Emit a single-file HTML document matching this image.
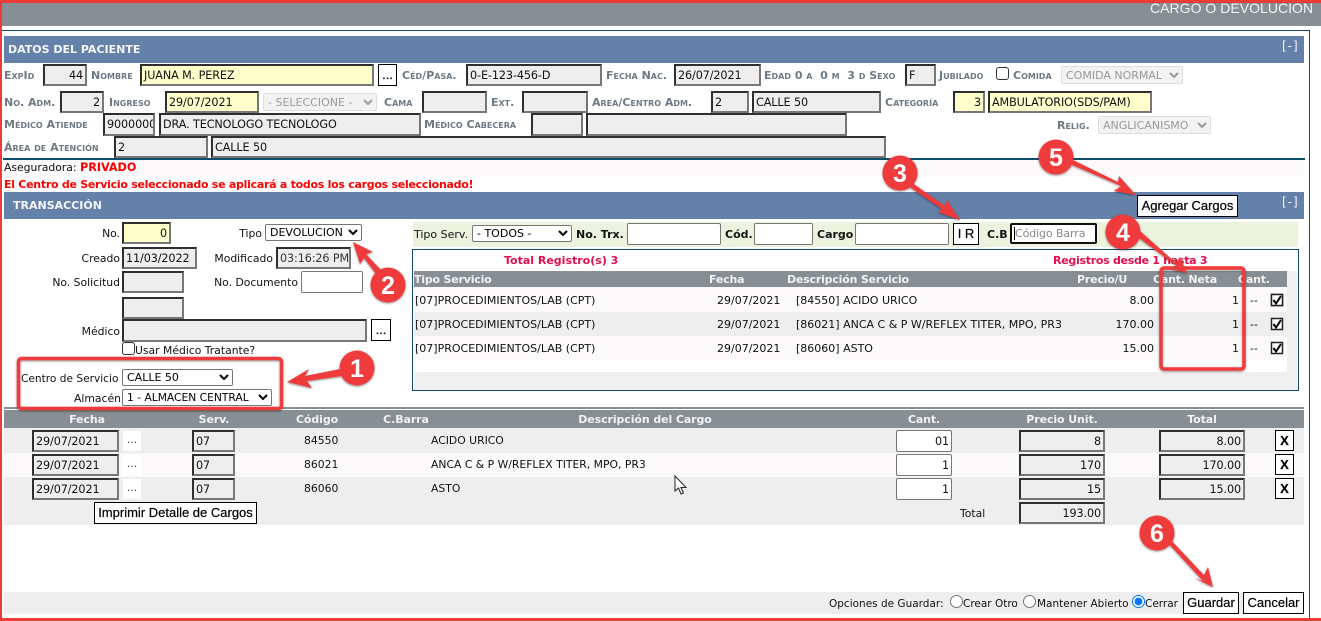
<!DOCTYPE html>
<html><head><meta charset="utf-8"><style>
html,body{margin:0;padding:0;background:#fff}
body{width:1321px;height:621px;position:relative;overflow:hidden;font:11px "DejaVu Sans",sans-serif;color:#111}
div{position:absolute;box-sizing:border-box;white-space:nowrap}
.b{background:#6482a9;color:#f4f6fa;font:bold 11px "DejaVu Sans",sans-serif;left:4px;width:1300px;height:27px;line-height:28px;padding-left:4px}
.l{font:bold 11px "DejaVu Sans",sans-serif;font-variant:small-caps;color:#6d7984;line-height:14px;margin-top:1px}
.i{border:2px solid;border-color:#2e2e2e #777 #777 #2e2e2e;background:#eee;padding:0 2px;line-height:20px;font-size:11.2px;overflow:hidden;letter-spacing:-.1px;height:22px}
.y{background:#ffc}
.r{text-align:right}
.w{background:#fff;border:1px solid #777;border-radius:2px;line-height:21px}
.t{line-height:14px;font-size:10.8px;margin-top:1px}
.q{font-size:11px}
.s{font-size:10.5px}
.bn{background:#fff;border:1px solid #000;text-align:center;font:13px "Liberation Sans",sans-serif;color:#000;-webkit-text-stroke:.2px #000}
.h{background:#878e94;color:#f2f2f2;font:bold 11px "DejaVu Sans",sans-serif;line-height:19px;letter-spacing:-.1px}
.h div{top:0}
.c{transform:translateX(-50%)}
.m{left:1282px;color:#f4f6fa;font:12px 'DejaVu Sans';letter-spacing:1px;line-height:14px}
select{position:absolute;box-sizing:border-box;margin:0;font:11px "DejaVu Sans",sans-serif;padding:0;background:#fff;border:1px solid #767676;border-radius:2px;color:#000}
select:disabled{background:#f2f2f2;color:#999;border-color:#ddd;opacity:1}
input{position:absolute;margin:0}
input[type=checkbox]{appearance:none;-webkit-appearance:none;border:1px solid #333;border-radius:3px;background:#fff;width:13px;height:13px}
</style></head><body>
<div style="left:0;top:0;width:1321px;height:26px;background:#878e94"></div>
<div style="left:0;top:0;width:1321px;height:3px;background:#ef3a3a"></div>
<div style="left:1150px;top:0;font:14px 'Liberation Sans',sans-serif;color:#f4f4f4;line-height:16px;letter-spacing:.03px">CARGO O DEVOLUCION</div>
<div style="left:2px;top:30px;width:1308px;height:591px;border:1px solid #0d4c6b;border-width:1px 1px 0 0"></div>
<div style="left:0;top:0;width:2px;height:621px;background:#ef3a3a"></div>
<div class="b" style="top:36px">DATOS DEL PACIENTE</div>
<div class="m" style="top:39px">[-]</div>

<!-- row 1 -->
<div class="l" style="left:4px;top:68px">ExpId</div><div class="i r" style="left:43px;top:64px;width:44px">44</div>
<div class="l" style="left:91px;top:68px">Nombre</div><div class="i y" style="left:140px;top:64px;width:234px">JUANA M. PEREZ</div>
<div class="bn" style="left:378px;top:64px;width:19px;height:22px;line-height:20px">...</div>
<div class="l" style="left:402px;top:68px">Céd/Pasa.</div><div class="i" style="left:466px;top:64px;width:136px">0-E-123-456-D</div>
<div class="l" style="left:606px;top:68px">Fecha Nac.</div><div class="i" style="left:674px;top:64px;width:87px">26/07/2021</div>
<div class="l" style="left:764px;top:68px">Edad 0 a&nbsp; 0 m&nbsp; 3 d Sexo</div><div class="i" style="left:905px;top:64px;width:31px">F</div>
<div class="l" style="left:939px;top:68px">Jubilado</div><input type="checkbox" style="left:996px;top:67px">
<div class="l" style="left:1013px;top:68px">Comida</div>
<select disabled style="left:1061px;top:66px;width:122px;height:18px"><option>COMIDA NORMAL</option></select>

<!-- row 2 -->
<div class="l" style="left:4px;top:95px">No. Adm.</div><div class="i r" style="left:60px;top:91px;width:44px">2</div>
<div class="l" style="left:109px;top:95px">Ingreso</div><div class="i y" style="left:165px;top:91px;width:94px">29/07/2021</div>
<select disabled style="left:263px;top:93px;width:114px;height:18px"><option>- SELECCIONE -</option></select>
<div class="l" style="left:384px;top:95px">Cama</div><div class="i" style="left:422px;top:91px;width:65px"></div>
<div class="l" style="left:491px;top:95px">Ext.</div><div class="i" style="left:522px;top:91px;width:66px"></div>
<div class="l" style="left:592px;top:95px">Area/Centro Adm.</div><div class="i" style="left:711px;top:91px;width:38px">2</div>
<div class="i" style="left:752px;top:91px;width:129px">CALLE 50</div>
<div class="l" style="left:885px;top:95px">Categoría</div><div class="i y r" style="left:953px;top:91px;width:32px">3</div>
<div class="i y" style="left:988px;top:91px;width:164px">AMBULATORIO(SDS/PAM)</div>

<!-- row 3 -->
<div class="l" style="left:4px;top:117px">Médico Atiende</div><div class="i" style="left:103px;top:113px;width:52px;height:23px">9000000</div>
<div class="i" style="left:159px;top:113px;width:262px;height:23px">DRA. TECNOLOGO TECNOLOGO</div>
<div class="l" style="left:424px;top:117px">Médico Cabecera</div><div class="i" style="left:531px;top:113px;width:52px;height:23px"></div>
<div class="i" style="left:586px;top:113px;width:261px;height:23px"></div>
<div class="l" style="left:1057px;top:118px">Relig.</div>
<select disabled style="left:1098px;top:116px;width:113px;height:18px"><option>ANGLICANISMO</option></select>

<!-- row 4 -->
<div class="l" style="left:4px;top:140px">Área de Atención</div><div class="i" style="left:114px;top:136px;width:94px">2</div>
<div class="i" style="left:211px;top:136px;width:675px">CALLE 50</div>
<div style="left:3px;top:158px;width:1302px;height:2px;background:#0d4c6b"></div>
<div style="left:4px;top:160px;width:1300px;height:16px;background:#fbf9fa"></div>
<div class="t" style="left:4px;top:160px">Aseguradora: <b style="color:#f00;font-size:11.2px">PRIVADO</b></div>
<div style="left:4px;top:178px;font:bold 11px 'DejaVu Sans';color:#f00;line-height:14px;letter-spacing:-.27px">El Centro de Servicio seleccionado se aplicará a todos los cargos seleccionado!</div>

<div class="b" style="top:192px;padding-left:9px">TRANSACCIÓN</div>
<div class="m" style="top:195px">[-]</div>

<!-- left transaction -->
<div class="t" style="left:60px;width:60px;text-align:right;top:226px">No.</div><div class="i y r" style="left:122px;top:222px;width:49px">0</div>
<div class="t" style="left:228px;top:226px;width:34px;text-align:right">Tipo</div>
<select style="left:265px;top:224px;width:97px;height:17px"><option>DEVOLUCION</option></select>
<div class="t" style="left:60px;width:60px;text-align:right;top:251px">Creado</div><div class="i" style="left:122px;top:247px;width:75px">11/03/2022</div>
<div class="t" style="left:200px;top:251px;width:73px;text-align:right">Modificado</div><div class="i" style="left:276px;top:247px;width:75px;color:#333">03:16:26 PM</div>
<div class="t" style="left:40px;width:80px;text-align:right;top:275px">No. Solicitud</div><div class="i" style="left:122px;top:271px;width:62px"></div>
<div class="t" style="left:200px;top:275px;width:98px;text-align:right">No. Documento</div><div class="i w" style="left:301px;top:271px;width:62px"></div>
<div class="i" style="left:122px;top:297px;width:62px"></div>
<div class="t" style="left:60px;width:60px;text-align:right;top:324px">Médico</div><div class="i" style="left:122px;top:319px;width:245px;height:23px"></div>
<div class="bn" style="left:371px;top:319px;width:20px;height:22px;line-height:20px">...</div>
<input type="checkbox" style="left:122px;top:342px">
<div class="t" style="left:135px;top:343px">Usar Médico Tratante?</div>
<div class="t" style="left:21px;top:371px;font-size:10.6px">Centro de Servicio</div>
<select style="left:122px;top:369px;width:111px;height:17px"><option>CALLE 50</option></select>
<div class="t" style="left:74px;top:391px">Almacén</div>
<select style="left:122px;top:389px;width:150px;height:17px;font-size:10.7px"><option>1 - ALMACEN CENTRAL</option></select>

<!-- filter -->
<div style="left:413px;top:222px;width:885px;height:25px;background:#ebf3de"></div>
<div class="t q" style="left:414px;top:227px">Tipo Serv.</div>
<select style="left:472px;top:225px;width:100px;height:17px"><option>- TODOS -</option></select>
<div class="t q" style="left:576px;top:227px;font-weight:bold">No. Trx.</div><div class="i w" style="left:627px;top:223px;width:94px"></div>
<div class="t q" style="left:725px;top:227px;font-weight:bold">Cód.</div><div class="i w" style="left:754px;top:223px;width:59px"></div>
<div class="t q" style="left:817px;top:227px;font-weight:bold">Cargo</div><div class="i w" style="left:855px;top:223px;width:94px"></div>
<div class="bn" style="left:953px;top:223px;width:26px;height:22px;line-height:20px">I R</div>
<div class="t q" style="left:987px;top:227px;font-weight:bold">C.B</div>
<div class="i" style="left:1010px;top:223px;width:87px;height:21px;background:#fff;border-color:#111;border-radius:2px;color:#888;line-height:18px;padding-left:3px;font-size:11px">Código Barra</div>
<div style="left:1014px;top:227px;width:1px;height:13px;background:#000"></div>

<!-- list -->
<div style="left:412px;top:249px;width:887px;height:142px;border:1px solid #0d4c6b;background:#fff"></div>
<div style="left:504px;top:254px;font:bold 11px 'DejaVu Sans';color:#e0104f;line-height:14px">Total Registro(s) 3</div>
<div style="left:1053px;top:254px;font:bold 11px 'DejaVu Sans';color:#e0104f;line-height:14px;letter-spacing:-.28px">Registros desde 1 hasta 3</div>
<div style="left:1287px;top:271px;width:10px;height:101px;background:#f0f0f0"></div>
<div class="h" style="left:414px;top:271px;width:873px;height:16px;line-height:18px;letter-spacing:-.2px">
<div style="left:0">Tipo Servicio</div><div style="left:295px">Fecha</div><div style="left:373px">Descripción Servicio</div><div style="left:663px">Precio/U</div><div style="left:739px">Cant. Neta</div><div style="left:824px">Cant.</div></div>
<div style="left:414px;top:287px;width:873px;height:25px;background:#fbf9fa"></div>
<div style="left:414px;top:312px;width:873px;height:24px;background:#eee"></div>
<div style="left:414px;top:336px;width:873px;height:24px;background:#fbf9fa"></div>
<div style="left:414px;top:372px;width:883px;height:18px;background:#f0f0f0"></div>

<div class="t q" style="left:415px;top:293px">[07]PROCEDIMIENTOS/LAB (CPT)</div><div class="t q" style="left:717px;top:293px">29/07/2021</div><div class="t q" style="left:796px;top:293px">[84550] ACIDO URICO</div><div class="t q r" style="left:1100px;width:54px;top:293px">8.00</div><div class="t q" style="left:1232px;top:293px">1</div><div class="t q" style="left:1250px;top:293px">--</div>
<div class="t q" style="left:415px;top:317px">[07]PROCEDIMIENTOS/LAB (CPT)</div><div class="t q" style="left:717px;top:317px">29/07/2021</div><div class="t q" style="left:796px;top:317px">[86021] ANCA C &amp; P W/REFLEX TITER, MPO, PR3</div><div class="t q r" style="left:1100px;width:54px;top:317px">170.00</div><div class="t q" style="left:1232px;top:317px">1</div><div class="t q" style="left:1250px;top:317px">--</div>
<div class="t q" style="left:415px;top:341px">[07]PROCEDIMIENTOS/LAB (CPT)</div><div class="t q" style="left:717px;top:341px">29/07/2021</div><div class="t q" style="left:796px;top:341px">[86060] ASTO</div><div class="t q r" style="left:1100px;width:54px;top:341px">15.00</div><div class="t q" style="left:1232px;top:341px">1</div><div class="t q" style="left:1250px;top:341px">--</div>

<!-- cargos -->
<div style="left:4px;top:407px;width:1300px;height:2px;background:#878e94"></div>
<div class="h" style="left:4px;top:410px;width:1300px;height:18px">
<div class="c" style="left:83px">Fecha</div><div class="c" style="left:210px">Serv.</div><div class="c" style="left:313px">Código</div><div class="c" style="left:402px">C.Barra</div><div class="c" style="left:641px">Descripción del Cargo</div><div class="c" style="left:920px">Cant.</div><div class="c" style="left:1058px">Precio Unit.</div><div class="c" style="left:1198px">Total</div></div>
<div style="left:4px;top:428px;width:1300px;height:25px;background:#eee"></div>
<div style="left:4px;top:453px;width:1300px;height:24px;background:#fbf9fa"></div>
<div style="left:4px;top:477px;width:1300px;height:48px;background:#eee"></div>

<div class="i" style="left:32px;top:430px;width:87px">29/07/2021</div><div style="left:123px;top:431px;width:18px;height:20px;background:#fff;text-align:center;color:#444;line-height:18px">...</div><div class="i" style="left:192px;top:430px;width:43px">07</div><div class="t" style="left:304px;top:433px">84550</div><div class="t" style="left:431px;top:433px">ACIDO URICO</div><div class="i w r" style="left:896px;top:430px;width:56px">01</div><div class="i r" style="left:1019px;top:430px;width:86px">8</div><div class="i r" style="left:1159px;top:430px;width:86px">8.00</div><div class="bn" style="left:1275px;top:430px;width:19px;height:21px;line-height:19px;font-weight:bold">X</div>
<div class="i" style="left:32px;top:454px;width:87px">29/07/2021</div><div style="left:123px;top:455px;width:18px;height:20px;background:#fff;text-align:center;color:#444;line-height:18px">...</div><div class="i" style="left:192px;top:454px;width:43px">07</div><div class="t" style="left:304px;top:457px">86021</div><div class="t" style="left:431px;top:457px">ANCA C &amp; P W/REFLEX TITER, MPO, PR3</div><div class="i w r" style="left:896px;top:454px;width:56px">1</div><div class="i r" style="left:1019px;top:454px;width:86px">170</div><div class="i r" style="left:1159px;top:454px;width:86px">170.00</div><div class="bn" style="left:1275px;top:454px;width:19px;height:21px;line-height:19px;font-weight:bold">X</div>
<div class="i" style="left:32px;top:478px;width:87px">29/07/2021</div><div style="left:123px;top:479px;width:18px;height:20px;background:#fff;text-align:center;color:#444;line-height:18px">...</div><div class="i" style="left:192px;top:478px;width:43px">07</div><div class="t" style="left:304px;top:481px">86060</div><div class="t" style="left:431px;top:481px">ASTO</div><div class="i w r" style="left:896px;top:478px;width:56px">1</div><div class="i r" style="left:1019px;top:478px;width:86px">15</div><div class="i r" style="left:1159px;top:478px;width:86px">15.00</div><div class="bn" style="left:1275px;top:478px;width:19px;height:21px;line-height:19px;font-weight:bold">X</div>
<div class="bn" style="left:94px;top:502px;width:163px;height:22px;line-height:20px">Imprimir Detalle de Cargos</div>
<div class="t" style="left:960px;top:506px">Total</div><div class="i r" style="left:1019px;top:502px;width:86px">193.00</div>

<!-- bottom -->
<div style="left:4px;top:592px;width:1300px;height:22px;background:#eee"></div>
<div class="t s" style="left:829px;top:596px">Opciones de Guardar:</div>
<input type="radio" style="left:950px;top:595px;width:13px;height:13px"><div class="t s" style="left:963px;top:596px">Crear Otro</div>
<input type="radio" style="left:1023px;top:595px;width:13px;height:13px"><div class="t s" style="left:1037px;top:596px">Mantener Abierto</div>
<input type="radio" checked style="left:1132px;top:595px;width:13px;height:13px"><div class="t s" style="left:1145px;top:596px">Cerrar</div>
<div class="bn" style="left:1183px;top:592px;width:56px;height:22px;line-height:20px">Guardar</div>
<div class="bn" style="left:1243px;top:592px;width:61px;height:22px;line-height:20px">Cancelar</div>
<div style="left:0;top:618px;width:1321px;height:3px;background:#ef3a3a"></div>

<!-- cursor + annotations -->
<svg style="position:absolute;left:0;top:0" width="1321" height="621" viewBox="0 0 1321 621">
<g fill="#fff" stroke="#222" stroke-width="1.500">
<rect x="1271" y="294" width="12" height="12" stroke="#9a8a70" stroke-width="1"/><rect x="1271.500" y="294.500" width="11" height="11"/>
<rect x="1271.500" y="318.500" width="11" height="11"/>
<rect x="1271.500" y="342.500" width="11" height="11"/>
</g>
<g fill="none" stroke="#000" stroke-width="2">
<path d="M1273.500 300L1276 303.500 1281 296"/>
<path d="M1273.500 324L1276 327.500 1281 320"/>
<path d="M1273.500 348L1276 351.500 1281 344"/>
</g>
<path d="M675 476V491L678.500 488 681 494 683.500 493 681 487.500H686Z" fill="#fff" stroke="#222" stroke-width="1"/>
<defs><filter id="s" x="-30%" y="-30%" width="160%" height="160%"><feDropShadow dx="0" dy="1" stdDeviation="1" flood-color="#000" flood-opacity=".45"/></filter></defs>
<g fill="none" stroke="#ef3a3a" stroke-width="3.500" filter="url(#s)">
<rect x="18.500" y="358.500" width="263" height="50" rx="3"/>
<rect x="1161" y="268" width="83" height="101" rx="3"/>
</g>
<g fill="#ef3a3a" filter="url(#s)">
<path d="M340 369L305 376 309 369 287 382 312 388 307 381 342 376Z"/>
<path d="M381 270L366 254 373 252 353 242 360 264 364 258 376 274Z"/>
<path d="M911 182L945 206 947 200 960 220 938 212 942 209 908 186Z"/>
<path d="M1135 235L1178 267 1171 269 1187 273 1180 257 1176 263 1139 230Z"/>
<path d="M1070 164L1121 186 1114 191 1136 195 1119 176 1118 182 1073 160Z"/>
<path d="M1167 542L1203 581 1194 578 1213 587 1208 567 1204 575 1170 539Z"/>
<circle cx="357" cy="368" r="17.500"/><circle cx="388" cy="285" r="17.500"/><circle cx="900" cy="173" r="17.500"/><circle cx="1123" cy="232" r="17.500"/><circle cx="1056" cy="157" r="17.500"/><circle cx="1157" cy="533" r="17.500"/>
</g>
<g fill="#fff" font-family="Liberation Sans" font-weight="bold" font-size="25" text-anchor="middle">
<text x="357" y="377">1</text><text x="388" y="294">2</text><text x="900" y="182">3</text><text x="1123" y="241">4</text><text x="1056" y="166">5</text><text x="1157" y="542">6</text>
</g>
</svg>
<div class="bn" style="left:1137px;top:195px;width:101px;height:22px;line-height:20px">Agregar Cargos</div>
</body></html>
